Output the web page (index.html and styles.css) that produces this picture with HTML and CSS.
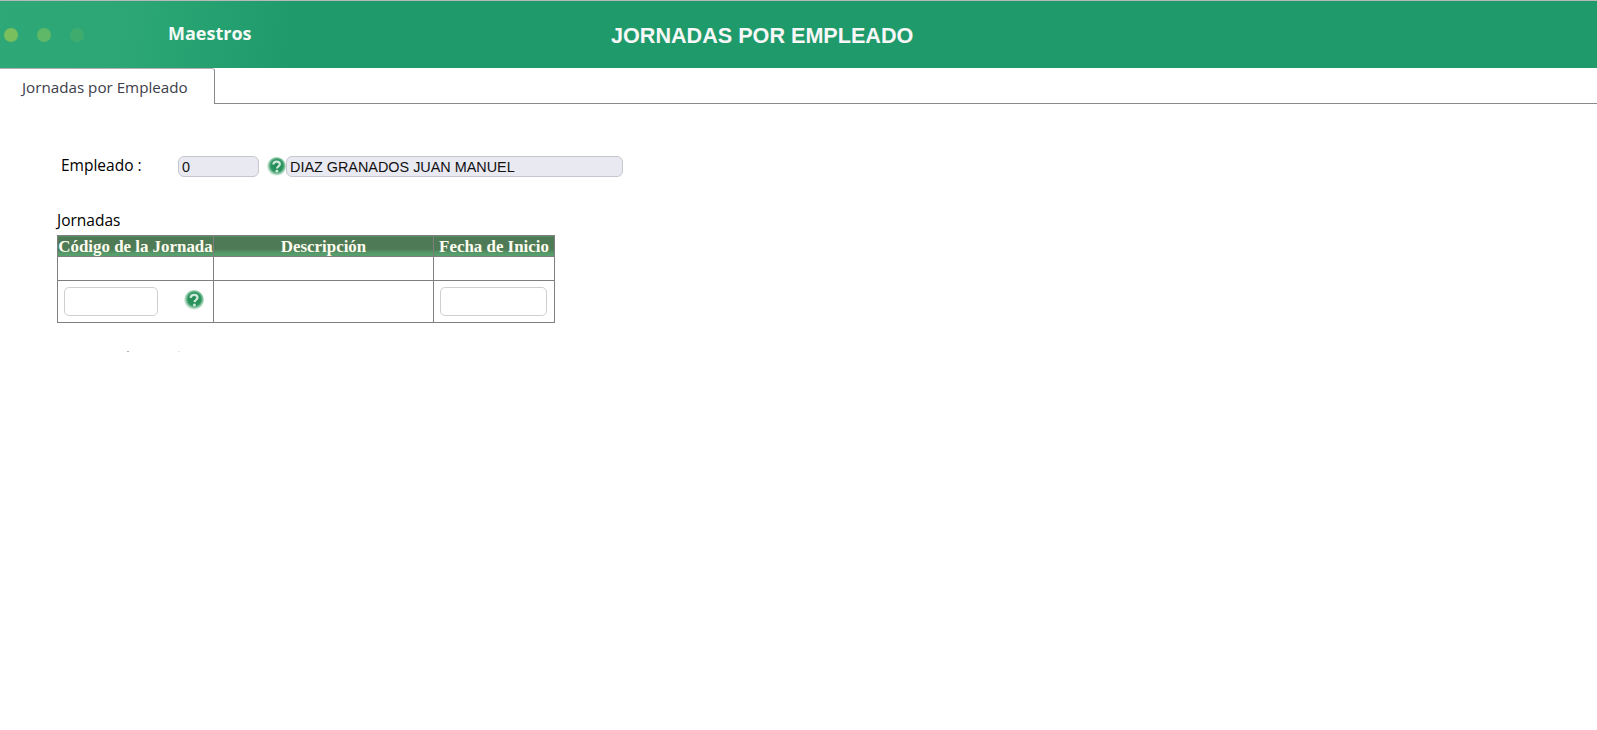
FILE: index.html
```html
<!DOCTYPE html>
<html lang="es">
<head>
<meta charset="utf-8">
<title>Jornadas por Empleado</title>
<link rel="stylesheet" href="styles.css">
</head>
<body>
<header class="topbar">
  <div class="brand">
    <div class="dots"><span class="dot d1"></span><span class="dot d2"></span><span class="dot d3"></span></div>
    <span class="brand-name">Maestros</span>
  </div>
  <h1 class="title">JORNADAS POR EMPLEADO</h1>
</header>
<nav class="tabs"><div class="tab">Jornadas por Empleado</div></nav>
<main class="content">
  <div class="field-row">
    <label class="field-label">Empleado :</label>
    <input class="input code" type="text" value="0" readonly>
    <svg class="help" viewBox="0 0 20 20"><use href="#q"></use></svg>
    <input class="input name" type="text" value="DIAZ GRANADOS JUAN MANUEL" readonly>
  </div>
  <div class="section-label">Jornadas</div>
  <table class="grid">
    <thead>
      <tr><th class="c1">Código de la Jornada</th><th class="c2">Descripción</th><th class="c3">Fecha de Inicio</th></tr>
    </thead>
    <tbody>
      <tr class="empty"><td></td><td></td><td></td></tr>
      <tr class="edit">
        <td><div class="cell-flex"><input class="input cell-code" type="text"><svg class="help" viewBox="0 0 20 20"><use href="#q"></use></svg></div></td>
        <td></td>
        <td><input class="input cell-date" type="text"></td>
      </tr>
    </tbody>
  </table>
  <div class="residue"><span class="speck s1"></span><span class="speck s2"></span></div>
</main>
<svg class="defs" width="0" height="0">
  <defs>
    <radialGradient id="qb" cx="52%" cy="46%" r="52%">
      <stop offset="0" stop-color="#1f8a52"/>
      <stop offset="0.62" stop-color="#2c9560"/>
      <stop offset="0.8" stop-color="#86c4a0"/>
      <stop offset="0.92" stop-color="#c8e4d3"/>
      <stop offset="1" stop-color="#e6f3eb"/>
    </radialGradient>
    <symbol id="q" viewBox="0 0 20 20">
      <circle cx="10" cy="10" r="10" fill="url(#qb)"/>
      <path d="M6.7 7.9C6.8 5.9 8.3 4.8 10.2 4.8C12.1 4.8 13.5 5.9 13.5 7.6C13.5 9.8 10.7 10 10.5 12.1" fill="none" stroke="#cfe8d9" stroke-width="2.3"/>
      <circle cx="10.4" cy="14.9" r="1.5" fill="#cfe8d9"/>
    </symbol>
  </defs>
</svg>
</body>
</html>
```
FILE: styles.css
```css
* { box-sizing: border-box; }
html, body { margin: 0; padding: 0; background: #fff; height: 100%; overflow: hidden; }
body { font-family: "Liberation Sans", Arial, sans-serif; color: #000; border-top: 1px solid #b9b9b9; }
.topbar {
  height: 67px;
  background: #1f9a6b;
  display: flex;
  align-items: center;
}
.brand {
  width: 290px;
  height: 100%;
  flex: none;
  display: flex;
  align-items: center;
  background: linear-gradient(100deg, #2fa877 0%, #2ba674 45%, #1f9a6b 100%);
  padding-left: 4px;
}
.dots { display: flex; gap: 19px; width: 164px; flex: none; }
.dot { width: 14px; height: 14px; border-radius: 50%; }
.d1 { background: #79bf5e; }
.d2 { background: #5fb768; }
.d3 { background: #3fac6d; }
.brand-name { font: 700 18px "Open Sans", sans-serif; color: #f4faf6; position: relative; top: -2px; }
.title {
  margin: 2px 0 0 321px;
  font: 700 21.6px "Liberation Sans", Arial, sans-serif;
  color: #f7f7f7;
}
.tabs {
  height: 36px;
  border-bottom: 1px solid #8a8a8a;
  display: flex;
}
.tab {
  width: 215px;
  height: 36px;
  background: #fff;
  border-right: 1px solid #8a8a8a;
  border-top: 1px solid #b0b0b0;
  border-top-right-radius: 3px;
  padding: 8px 0 0 22px;
  font: 400 15.2px "Open Sans", sans-serif;
  color: #3d3d4a;
}
.content { padding: 52px 0 0 57px; }
.field-row { display: flex; align-items: center; height: 21px; }
.field-label { width: 121px; padding-left: 4px; font: 400 15.5px "Open Sans", sans-serif; flex: none; position: relative; top: -2px; }
.input {
  border: 1px solid #c6c6ce;
  border-radius: 6px;
  font: 400 14.4px "Liberation Sans", Arial, sans-serif;
  color: #111;
  padding: 1px 3px;
  outline: none;
  background: #fff;
}
.code { width: 81px; height: 21px; background: #e9e9f1; }
.name { width: 337px; height: 21px; background: #e9e9f1; }
.help { width: 19px; height: 19px; flex: none; display: block; }
.field-row .help { margin: 0 0 0 8px; }
.section-label { margin-top: 33px; height: 25px; font: 400 15.5px "Open Sans", sans-serif; line-height: 20px; }
.grid { border-collapse: collapse; width: 497px; table-layout: fixed; }
.grid th, .grid td { border: 1px solid #7f7f7f; padding: 0; }
.grid th {
  height: 21px;
  padding-top: 1px;
  font: 700 16.9px/18px "Liberation Serif", "Times New Roman", serif;
  color: #fffdf0;
  text-align: center;
  white-space: nowrap;
  background: linear-gradient(#4e7a55 0%, #4e7a55 62%, #569f6d 88%, #569f6d 100%);
}
.c1 { width: 156px; }
.c2 { width: 220px; }
.c3 { width: 121px; }
.empty td { height: 24px; }
.edit td { height: 42px; padding: 0 6px; }
.cell-flex { display: flex; align-items: center; }
.cell-code { width: 94px; height: 29px; border-radius: 5px; background: #fff; border-color: #cfcfcf; }
.cell-flex .help { width: 20px; height: 20px; margin: -3px 0 0 26px; }
.cell-date { width: 107px; height: 29px; display: block; border-radius: 5px; border-color: #cfcfcf; }
.residue { display: flex; margin: 28px 0 0 70px; height: 2px; }
.speck { width: 2px; height: 1px; }
.s1 { background: #c9a3ad; }
.s2 { background: #e4e4e4; margin-left: 49px; }
.defs { position: absolute; }
```
